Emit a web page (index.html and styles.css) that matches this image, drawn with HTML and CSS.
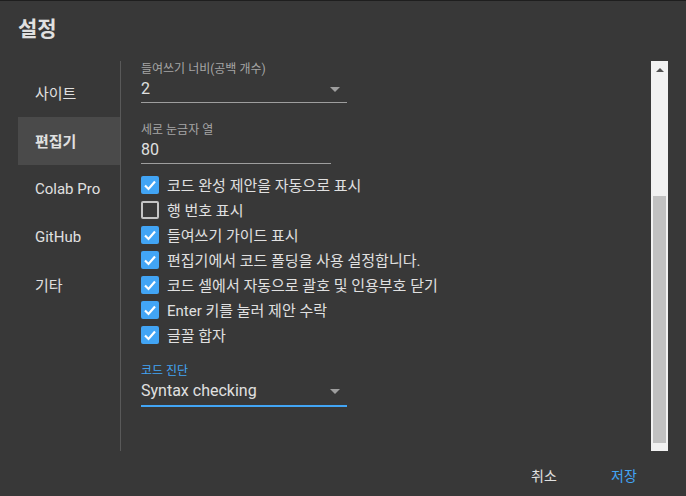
FILE: index.html
```html
<!DOCTYPE html>
<html lang="ko">

<head>
    <meta charset="UTF-8">
    <meta name="viewport" content="width=device-width, initial-scale=1.0">
    <title>설정</title>
    <link rel="stylesheet" href="styles.css">
</head>

<body>
    <div class="dialog">
        <h1 class="title">설정</h1>

        <div class="main">
            <ul class="nav">
                <li class="nav-item">사이트</li>
                <li class="nav-item active">편집기</li>
                <li class="nav-item">Colab Pro</li>
                <li class="nav-item">GitHub</li>
                <li class="nav-item">기타</li>
            </ul>

            <div class="pane">
                <div class="form">
                    <div class="field first">
                        <label>들여쓰기 너비(공백 개수)</label>
                        <div class="select wide">
                            <span>2</span>
                            <span class="arrow"></span>
                        </div>
                    </div>

                    <div class="field">
                        <label>세로 눈금자 열</label>
                        <div class="input">80</div>
                    </div>

                    <div class="checks">
                        <div class="check-row">
                            <span class="box checked"><svg viewBox="0 0 18 18"><polyline points="4,9.5 7.5,13 14,5.5" /></svg></span>
                            코드 완성 제안을 자동으로 표시
                        </div>
                        <div class="check-row">
                            <span class="box"></span>
                            행 번호 표시
                        </div>
                        <div class="check-row">
                            <span class="box checked"><svg viewBox="0 0 18 18"><polyline points="4,9.5 7.5,13 14,5.5" /></svg></span>
                            들여쓰기 가이드 표시
                        </div>
                        <div class="check-row">
                            <span class="box checked"><svg viewBox="0 0 18 18"><polyline points="4,9.5 7.5,13 14,5.5" /></svg></span>
                            편집기에서 코드 폴딩을 사용 설정합니다.
                        </div>
                        <div class="check-row">
                            <span class="box checked"><svg viewBox="0 0 18 18"><polyline points="4,9.5 7.5,13 14,5.5" /></svg></span>
                            코드 셀에서 자동으로 괄호 및 인용부호 닫기
                        </div>
                        <div class="check-row">
                            <span class="box checked"><svg viewBox="0 0 18 18"><polyline points="4,9.5 7.5,13 14,5.5" /></svg></span>
                            Enter 키를 눌러 제안 수락
                        </div>
                        <div class="check-row">
                            <span class="box checked"><svg viewBox="0 0 18 18"><polyline points="4,9.5 7.5,13 14,5.5" /></svg></span>
                            글꼴 합자
                        </div>
                    </div>

                    <div class="field focused">
                        <label>코드 진단</label>
                        <div class="select wide">
                            <span>Syntax checking</span>
                            <span class="arrow"></span>
                        </div>
                    </div>
                </div>

                <div class="scrollbar">
                    <div class="scroll-up"><span></span></div>
                    <div class="thumb"></div>
                </div>
            </div>
        </div>

        <div class="footer">
            <button class="btn">취소</button>
            <button class="btn primary">저장</button>
        </div>
    </div>
</body>

</html>
```

FILE: styles.css
```css
* {
    margin: 0;
    padding: 0;
    box-sizing: border-box;
}

body {
    background-color: #383838;
    border-top: 1px solid #1e1e1e;
    font-family: Roboto, "Noto Sans CJK KR", sans-serif;
    color: #e0e0e0;
    width: 686px;
    height: 496px;
    overflow: hidden;
}

.title {
    height: 60px;
    padding: 16px 18px 0;
    font-size: 21px;
    line-height: 24px;
    font-weight: bold;
}

.main {
    display: flex;
    height: 390px;
    margin: 0 18px;
}

/* left navigation */

.nav {
    list-style: none;
    width: 103px;
    padding-top: 8px;
    border-right: 1px solid #595959;
}

.nav-item {
    display: flex;
    align-items: center;
    height: 48px;
    padding-left: 17px;
    font-size: 15px;
    padding-bottom: 1px;
}

.nav-item.active {
    background-color: #4a4a4a;
    font-weight: bold;
}

/* settings pane */

.pane {
    flex: 1;
    display: flex;
    overflow: hidden;
}

.form {
    flex: 1;
    padding-left: 20px;
}

.field label {
    display: block;
    font-size: 12px;
    line-height: 16px;
    color: #a6a6a6;
    margin-bottom: 2px;
}

.field {
    margin-top: 19px;
}

.field.first {
    margin-top: 0;
}

.select,
.input {
    display: flex;
    justify-content: space-between;
    align-items: center;
    font-size: 16px;
    line-height: 20px;
    padding-bottom: 3px;
    border-bottom: 1px solid #9e9e9e;
}

.select.wide {
    width: 206px;
}

.input {
    width: 190px;
}

.arrow {
    width: 0;
    height: 0;
    margin-right: 7px;
    border-left: 5px solid transparent;
    border-right: 5px solid transparent;
    border-top: 5px solid #9e9e9e;
}

.field.focused {
    margin-top: 16px;
}

.field.focused label {
    color: #42a5f5;
}

.field.focused .select {
    padding-bottom: 4px;
    border-bottom: 2px solid #42a5f5;
}

/* checkboxes */

.checks {
    margin-top: 8px;
}

.check-row {
    display: flex;
    align-items: center;
    height: 25px;
    font-size: 15px;
}

.box {
    width: 18px;
    height: 18px;
    margin-right: 8px;
    border: 2px solid #c4c4c4;
    border-radius: 2px;
}

.box.checked {
    border: none;
    background-color: #42a5f5;
}

.box svg {
    display: block;
    width: 18px;
    height: 18px;
}

.box polyline {
    fill: none;
    stroke: #ffffff;
    stroke-width: 2.2;
}

/* scrollbar */

.scrollbar {
    width: 17px;
    background-color: #f1f1f1;
    display: flex;
    flex-direction: column;
    align-items: center;
}

.scroll-up {
    height: 17px;
    padding-top: 7px;
}

.scroll-up span {
    display: block;
    width: 0;
    height: 0;
    border-left: 4px solid transparent;
    border-right: 4px solid transparent;
    border-bottom: 4px solid #505050;
}

.thumb {
    width: 13px;
    height: 247px;
    margin-top: 118px;
    background-color: #c1c1c1;
}

/* footer */

.footer {
    display: flex;
    justify-content: flex-end;
    gap: 16px;
    height: 45px;
    padding: 6px 30px 0 0;
}

.btn {
    min-width: 64px;
    height: 36px;
    background: transparent;
    border: none;
    font-family: inherit;
    font-size: 14px;
    color: #e0e0e0;
}

.btn.primary {
    color: #42a5f5;
}
```
